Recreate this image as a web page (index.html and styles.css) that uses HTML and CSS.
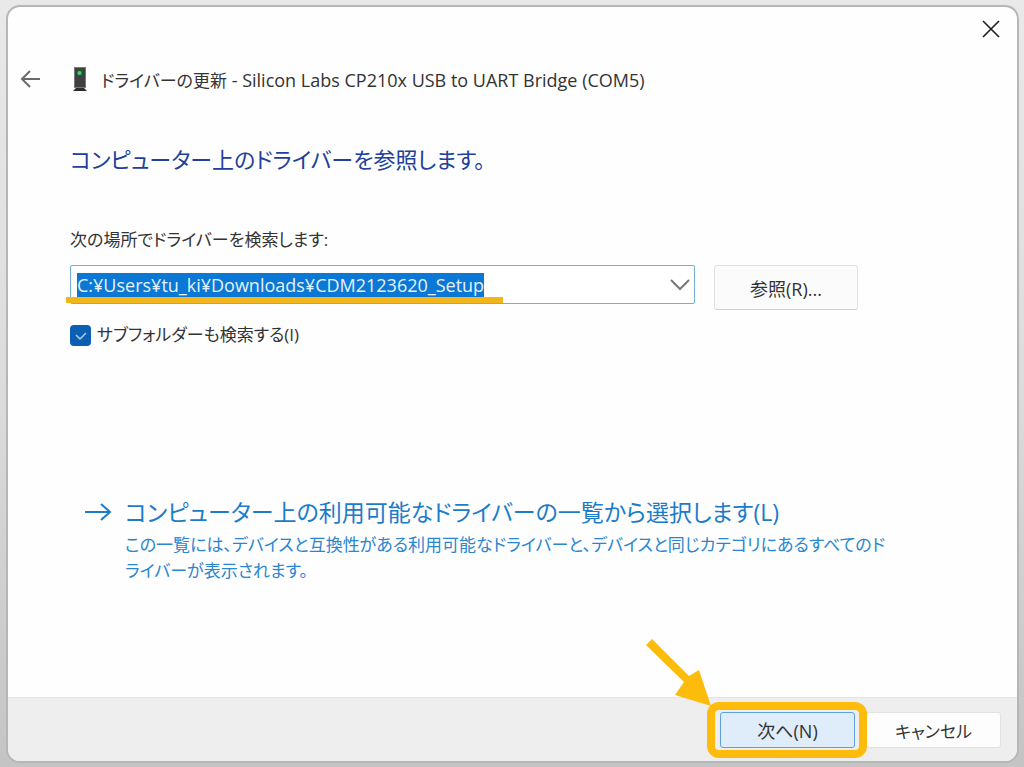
FILE: index.html
```
<!DOCTYPE html>
<html lang="ja">
<head>
    <meta charset="UTF-8">
    <meta name="viewport" content="width=device-width, initial-scale=1.0">
    <title>ドライバーの更新</title>
    <link rel="stylesheet" href="styles.css">
</head>
<body>
    <main class="dialog">
        <div class="caption">
            <button class="icon-button" type="button" aria-label="閉じる">
                <svg width="18" height="18" viewBox="0 0 18 18"><path d="M1 1L17 17M17 1L1 17" fill="none" stroke="#222" stroke-width="1.7"/></svg>
            </button>
        </div>

        <header class="title-bar">
            <button class="icon-button back" type="button" aria-label="戻る">
                <svg width="22" height="18" viewBox="0 0 22 18"><path d="M20 9H2M10 1L2 9L10 17" fill="none" stroke="#6a6a6a" stroke-width="2"/></svg>
            </button>
            <svg class="device-icon" width="14" height="24" viewBox="0 0 14 24">
                <rect x="1.5" y="0.5" width="11" height="20" fill="#3d4042" stroke="#77797a"/>
                <rect x="4" y="3" width="6" height="6" fill="#235c32"/>
                <circle cx="6.5" cy="6" r="2" fill="#3fd465"/>
                <path d="M3 21H11L14 24H0Z" fill="#2b2b2b"/>
            </svg>
            <span class="title"><span class="action">ドライバーの更新</span> - Silicon Labs CP210x USB to UART Bridge (COM5)</span>
        </header>

        <section class="content">
            <h1>コンピューター上のドライバーを参照します。</h1>

            <label class="path-label" for="path">次の場所でドライバーを検索します:</label>
            <div class="path-row">
                <div class="combo">
                    <input id="path" type="text" value="C:¥Users¥tu_ki¥Downloads¥CDM2123620_Setup" spellcheck="false">
                    <button class="icon-button" type="button" aria-label="一覧を開く">
                        <svg width="20" height="12" viewBox="0 0 20 12"><path d="M1 1L10 10L19 1" fill="none" stroke="#777" stroke-width="2"/></svg>
                    </button>
                    <span class="underline"></span>
                </div>
                <button class="button browse" type="button">参照(R)...</button>
            </div>

            <div class="check-row">
                <input id="subfolders" type="checkbox" checked>
                <label for="subfolders">サブフォルダーも検索する(I)</label>
            </div>

            <a class="command-link" href="#list">
                <svg width="27" height="20" viewBox="0 0 27 20"><path d="M0 10H25M16 2L25 10L16 18" fill="none" stroke="#1c7cc9" stroke-width="2"/></svg>
                <span class="command-text">
                    <span class="command-title">コンピューター上の利用可能なドライバーの一覧から選択します(L)</span>
                    <span class="command-note">この一覧には、デバイスと互換性がある利用可能なドライバーと、デバイスと同じカテゴリにあるすべてのドライバーが表示されます。</span>
                </span>
            </a>
        </section>

        <footer class="footer">
            <div class="next-wrap">
                <button class="button next" type="button">次へ(N)</button>
                <span class="highlight"></span>
                <svg class="pointer" width="68" height="68" viewBox="0 0 68 68"><path d="M7 0L44 37L54 31L66 67L30 56L39 43L1 6Z" fill="#fdbb0c"/></svg>
            </div>
            <button class="button cancel" type="button">キャンセル</button>
        </footer>
    </main>

    <script>
        // Path starts out selected so it can be typed over
        const path = document.getElementById('path');
        path.focus();
        path.select();
    </script>
</body>
</html>
```
FILE: styles.css
```
* {
    box-sizing: border-box;
}

body {
    margin: 0;
    min-height: 100vh;
    display: flex;
    padding: 5px 5px 4px 6px;
    background: linear-gradient(#e9e9e9, #dcdcdc 50%, #c4c4c4);
    color: #333;
    font-family: "Open Sans", "Noto Sans CJK JP", sans-serif;
    font-size: 17px;
    font-feature-settings: "palt";
}

button,
input {
    font: inherit;
    font-feature-settings: inherit;
    color: inherit;
}

.dialog {
    flex: 1;
    display: flex;
    flex-direction: column;
    background-color: #fefefe;
    border: 2px solid #b6b6b6;
    border-radius: 14px;
    overflow: hidden;
}

.icon-button {
    display: flex;
    padding: 0;
    border: none;
    background: none;
    cursor: pointer;
}

.caption {
    display: flex;
    justify-content: flex-end;
    padding: 13px 17px 0 0;
}

.title-bar {
    display: flex;
    align-items: center;
    height: 32px;
    margin-top: 25px;
    padding-left: 12px;
    font-size: 18px;
}

.title-bar .action {
    font-size: 17px;
}

.device-icon {
    margin: 0 14px 0 31px;
}

.content {
    flex: 1;
    padding: 0 120px 0 62px;
}

h1 {
    margin: 46px 0 0;
    color: #21409a;
    font-size: 22px;
    font-weight: 400;
    line-height: 36px;
}

.path-label {
    display: block;
    margin-top: 50px;
    line-height: 26px;
}

.path-row {
    display: flex;
    align-items: flex-start;
    gap: 19px;
    margin-top: 12px;
}

.combo {
    position: relative;
    flex: 0 1 625px;
    display: flex;
    align-items: center;
    height: 39px;
    padding: 0 4px 0 6px;
    background-color: #fff;
    border: 1px solid #6fb1d8;
    border-radius: 2px;
}

.combo input {
    flex: 1;
    min-width: 0;
    height: 28px;
    padding: 0;
    border: none;
    outline: none;
    background: none;
    font-size: 18px;
}

.combo input::selection {
    background-color: #0a78d4;
    color: #e4f2fd;
}

.underline {
    position: absolute;
    left: -5px;
    bottom: 0;
    width: 437px;
    height: 6px;
    background-color: #f2b51b;
}

.button {
    padding: 0;
    background-color: #fdfdfd;
    border: 1px solid #e2e2e2;
    border-radius: 3px;
    cursor: pointer;
}

.browse {
    width: 144px;
    height: 45px;
    background-color: #fbfbfb;
    border-bottom-color: #d2d2d2;
    font-size: 18px;
}

.check-row {
    display: flex;
    align-items: center;
    gap: 6px;
    margin-top: 12px;
    line-height: 26px;
}

.check-row input {
    appearance: none;
    width: 21px;
    height: 21px;
    margin: 0;
    border-radius: 4px;
    background: #0d5fb4 url("data:image/svg+xml,%3Csvg xmlns='http://www.w3.org/2000/svg' viewBox='0 0 21 21'%3E%3Cpath d='M6 10l4 4 6-6' fill='none' stroke='%23a9d0f2' stroke-width='1.5'/%3E%3C/svg%3E");
}

.command-link {
    display: flex;
    align-items: flex-start;
    gap: 13px;
    margin-top: 146px;
    padding-left: 15px;
    color: #2a86d0;
    text-decoration: none;
}

.command-link svg {
    flex: none;
    margin-top: 8px;
}

.command-title {
    display: block;
    color: #1c7cc9;
    font-size: 23px;
    line-height: 36px;
}

.command-note {
    display: block;
    margin-top: 2px;
    line-height: 26px;
}

.footer {
    display: flex;
    justify-content: flex-end;
    gap: 11px;
    padding: 14px 16px 13px;
    background-color: #eeeeee;
    border-top: 1px solid #e4e4e4;
}

.next-wrap {
    position: relative;
}

.next,
.cancel {
    width: 135px;
    height: 36px;
}

.next {
    background-color: #dfecf9;
    border-color: #5f9fe0;
    font-size: 18px;
}

/* Frame and arrow marking the button to press */
.highlight {
    position: absolute;
    inset: -10px -12px -10px -13px;
    border: 8px solid #fdbb0c;
    border-radius: 12px;
    pointer-events: none;
}

.pointer {
    position: absolute;
    right: 142px;
    bottom: 41px;
    pointer-events: none;
}
```
